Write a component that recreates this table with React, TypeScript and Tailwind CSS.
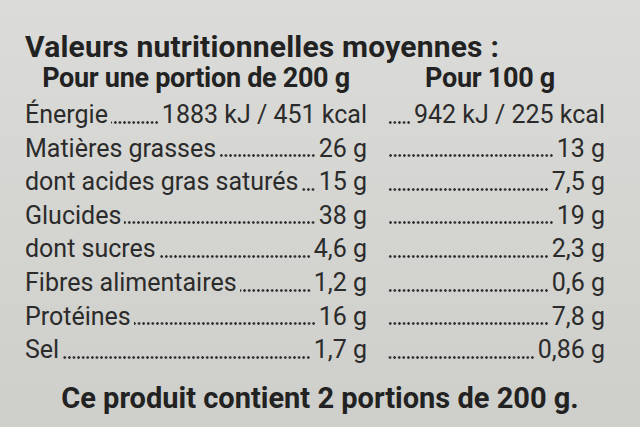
const rows = [
  { label: "Matières grasses", a: "26 g", b: "13 g" },
  { label: "dont acides gras saturés", a: "15 g", b: "7,5 g" },
  { label: "Glucides", a: "38 g", b: "19 g" },
  { label: "dont sucres", a: "4,6 g", b: "2,3 g" },
  { label: "Fibres alimentaires", a: "1,2 g", b: "0,6 g" },
  { label: "Protéines", a: "16 g", b: "7,8 g" },
  { label: "Sel", a: "1,7 g", b: "0,86 g" },
];

// dotted leader drawn as a repeated radial dot, sits on the text baseline
function Leader({ label, value }: { label?: string; value: string }) {
  return (
    <div className="flex min-w-0 items-baseline">
      {label && <span className="whitespace-nowrap">{label}</span>}
      <span className="mx-[3px] mb-[8px] h-[3px] min-w-[12px] flex-1 self-end bg-[radial-gradient(circle,#2e2e2e_1.1px,transparent_1.5px)] bg-[length:4.6px_3px] bg-right bg-repeat-x" />
      <span className="whitespace-nowrap">{value}</span>
    </div>
  );
}

export default function App() {
  return (
    <div
      className="h-[427px] w-[640px] overflow-hidden bg-gradient-to-b from-[#dbdbd9] to-[#cececa] pt-[30px] text-[#2b2b2b]"
      style={{ fontFamily: "Roboto, 'Liberation Sans', sans-serif" }}
    >
      <h1 className="pl-[25px] text-[30px] leading-[33px] font-bold tracking-[0.2px] text-[#222]">
        Valeurs nutritionnelles moyennes :
      </h1>

      <div className="grid grid-cols-[342px_218px] gap-x-[18px] pl-[25px] text-[27px] leading-[30px] font-bold tracking-[-0.3px] text-[#222]">
        <div className="text-center">Pour une portion de 200 g</div>
        <div className="pr-[8px] text-center">Pour 100 g</div>
      </div>

      <div className="mt-[5px] grid grid-cols-[342px_220px] gap-x-[18px] pl-[25px] text-[25px] leading-[33.6px]">
        <Leader label="Énergie" value="1883 kJ / 451 kcal" />
        <Leader value="942 kJ / 225 kcal" />
        {rows.map((r) => (
          <div key={r.label} className="contents">
            <Leader label={r.label} value={r.a} />
            <Leader value={r.b} />
          </div>
        ))}
      </div>

      <p className="mt-[14px] text-center text-[29px] leading-[34px] font-bold text-[#222]">
        Ce produit contient 2 portions de 200 g.
      </p>
    </div>
  );
}
